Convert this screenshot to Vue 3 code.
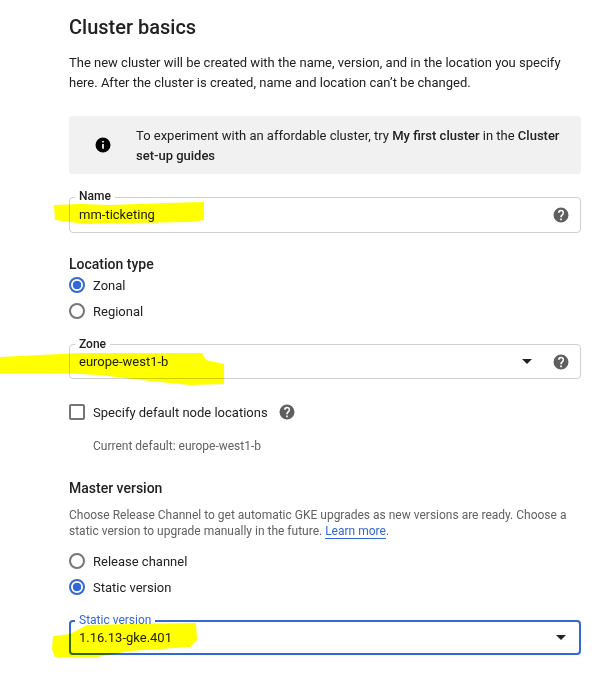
<template>
  <div class="page">
    <h1 class="title">Cluster basics</h1>
    <p class="intro">The new cluster will be created with the name, version, and in the location you specify here. After the cluster is created, name and location can’t be changed.</p>

    <div class="notice">
      <svg class="notice-icon" viewBox="0 0 24 24" width="18" height="18">
        <path fill="#000" d="M12 2a10 10 0 1 0 0 20 10 10 0 0 0 0-20zm1.2 15h-2.4v-6.4h2.4V17zm0-8.2h-2.4V6.6h2.4v2.2z" />
      </svg>
      <div class="notice-text">To experiment with an affordable cluster, try <b>My first cluster</b> in the <b>Cluster set-up guides</b></div>
    </div>

    <div class="field name-field">
      <span class="field-label">Name</span>
      <span class="field-value">mm-ticketing</span>
      <svg class="help" viewBox="0 0 24 24" width="18" height="18"><path :d="helpPath" /></svg>
    </div>

    <h2 class="section location">Location type</h2>
    <div class="radios">
      <label v-for="r in locationTypes" :key="r.label" class="radio-row">
        <span class="radio" :class="{ on: r.on }"></span>{{ r.label }}
      </label>
    </div>

    <div class="field zone-field">
      <span class="field-label">Zone</span>
      <span class="field-value">europe-west1-b</span>
      <span class="caret"></span>
      <svg class="help" viewBox="0 0 24 24" width="18" height="18"><path :d="helpPath" /></svg>
    </div>

    <div class="check-row">
      <span class="checkbox"></span>
      <span>Specify default node locations</span>
      <svg class="help check-help" viewBox="0 0 24 24" width="18" height="18"><path :d="helpPath" /></svg>
    </div>
    <div class="current">Current default: europe-west1-b</div>

    <h2 class="section master">Master version</h2>
    <p class="hint">Choose Release Channel to get automatic GKE upgrades as new versions are ready. Choose a static version to upgrade manually in the future. <a class="link">Learn more</a>.</p>
    <div class="radios version-radios">
      <label v-for="r in versionTypes" :key="r.label" class="radio-row">
        <span class="radio" :class="{ on: r.on }"></span>{{ r.label }}
      </label>
    </div>

    <div class="field version-field">
      <span class="field-label">Static version</span>
      <span class="field-value">1.16.13-gke.401</span>
      <span class="caret"></span>
    </div>

    <svg class="marker" width="608" height="695" viewBox="0 0 608 695">
      <path d="M54 205 L80 204 L110 205 L165 203 L204 202 L204 220 L190 222 L130 223 L85 224 L55 220 Z" />
      <path d="M0 357 L40 355 L80 353 L130 353 L202 353 L206 360 L224 364 L224 384 L190 385 L150 381 L100 375 L60 373 L0 373 Z" />
      <path d="M87 625 L130 624 L196 623 L197 640 L190 647 L130 651 L97 657 L55 657 L52 650 L53 636 L70 634 Z" />
    </svg>
  </div>
</template>

<script setup>
const helpPath = 'M12 2a10 10 0 1 0 0 20 10 10 0 0 0 0-20zm1.1 17h-2.2v-2.2h2.2V19zm2.3-7.7-.9.9c-.8.8-1.3 1.4-1.3 2.9h-2.2v-.5c0-1.1.5-2.1 1.3-2.9l1.3-1.3c.4-.4.6-.9.6-1.4a2 2 0 0 0-4 0H8a4 4 0 0 1 8 0c0 .9-.4 1.7-.6 2.3z'

const locationTypes = [
  { label: 'Zonal', on: true },
  { label: 'Regional', on: false },
]

const versionTypes = [
  { label: 'Release channel', on: false },
  { label: 'Static version', on: true },
]
</script>

<style scoped>
.page {
  position: relative;
  width: 512px;
  height: 695px;
  padding-left: 69px;
  padding-right: 27px;
  overflow: hidden;
  font-family: Roboto, "Liberation Sans", sans-serif;
  font-size: 13px;
  color: #212121;
  background: #fff;
}

.title {
  margin: 0;
  padding-top: 15px;
  font-size: 20px;
  line-height: 24px;
  font-weight: 500;
}

.intro {
  margin: 14px 0 0;
  font-size: 13px;
  line-height: 20px;
}

.notice {
  display: flex;
  align-items: center;
  height: 58px;
  margin-top: 23px;
  background: #f1f1f1;
  border-radius: 3px;
  font-size: 13px;
  line-height: 20px;
}

.notice-icon {
  flex-shrink: 0;
  margin-left: 25px;
  margin-right: 24px;
}

.notice-text {
  width: 440px;
  padding-top: 2px;
}

.notice-text b {
  font-weight: 500;
}

.field {
  position: relative;
  display: flex;
  align-items: center;
  box-sizing: border-box;
  height: 36px;
  padding: 0 10px 0 9px;
  border: 1px solid #d0d0d0;
  border-radius: 4px;
  font-size: 13px;
}

.name-field {
  margin-top: 23px;
}

.name-field .field-value {
  margin-bottom: 2px;
}

.zone-field {
  height: 35px;
  margin-top: 23px;
}

.version-field {
  height: 35px;
  margin-top: 23px;
  border: 2px solid #3367d6;
  padding: 0 10px 0 8px;
}

.field-label {
  position: absolute;
  top: -8px;
  left: 5px;
  padding: 0 4px;
  background: #fff;
  font-size: 12px;
  line-height: 14px;
  font-weight: 500;
}

.name-field .field-label {
  top: -9px;
}

.version-field .field-label {
  top: -9px;
  left: 4px;
  font-weight: 400;
  color: #3367d6;
}

.field-value {
  flex: 1;
  font-size: 13px;
}

.help {
  flex-shrink: 0;
  fill: #5f5f5f;
}

.caret {
  width: 0;
  height: 0;
  margin-right: 20px;
  border-left: 5px solid transparent;
  border-right: 5px solid transparent;
  border-top: 5px solid #212121;
}

.version-field .caret {
  margin-right: 3px;
}

.section {
  margin: 0;
  font-size: 14px;
  line-height: 20px;
  font-weight: 500;
}

.location {
  margin-top: 21px;
}

.radios {
  display: flex;
  flex-direction: column;
  gap: 6px;
  margin-top: 1px;
}

.radio-row {
  display: flex;
  align-items: center;
  height: 20px;
  font-size: 13px;
}

.radio {
  box-sizing: border-box;
  width: 16px;
  height: 16px;
  margin-right: 8px;
  border: 2px solid #757575;
  border-radius: 50%;
}

.radio.on {
  border-color: #3367d6;
  background: radial-gradient(circle, #3367d6 0 4px, #fff 4.6px);
}

.check-row {
  display: flex;
  align-items: center;
  height: 20px;
  margin-top: 23px;
  font-size: 13px;
}

.checkbox {
  box-sizing: border-box;
  width: 16px;
  height: 16px;
  margin-right: 8px;
  border: 2px solid #757575;
  border-radius: 2px;
}

.check-help {
  margin-left: 10px;
}

.current {
  margin-top: 16px;
  margin-left: 24px;
  font-size: 12px;
  line-height: 16px;
  color: #616161;
}

.master {
  margin-top: 24px;
}

.hint {
  margin: 9px 0 0;
  font-size: 12px;
  line-height: 16px;
  color: #616161;
}

.link {
  color: #3367d6;
  border-bottom: 1px solid #3367d6;
}

.version-radios {
  margin-top: 12px;
}

.marker {
  position: absolute;
  top: 0;
  left: 0;
  mix-blend-mode: multiply;
  pointer-events: none;
}

.marker path {
  fill: #ffff00;
}
</style>
